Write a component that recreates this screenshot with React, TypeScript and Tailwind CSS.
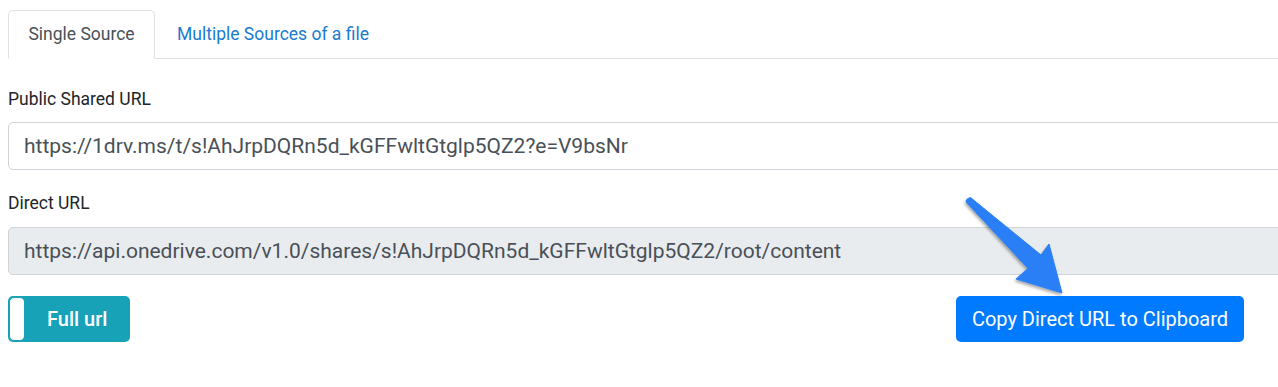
import { useState } from "react";

const PUBLIC_URL = "https://1drv.ms/t/s!AhJrpDQRn5d_kGFFwltGtglp5QZ2?e=V9bsNr";
const DIRECT_URL =
  "https://api.onedrive.com/v1.0/shares/s!AhJrpDQRn5d_kGFFwltGtglp5QZ2/root/content";

const Arrow = () => (
  <svg
    className="pointer-events-none absolute left-0 top-0"
    width="1278"
    height="387"
    viewBox="0 0 1278 387"
  >
    <defs>
      <filter id="arrowShadow" x="-20%" y="-20%" width="140%" height="140%">
        <feDropShadow dx="-1" dy="2" stdDeviation="1.5" floodColor="#000" floodOpacity="0.35" />
      </filter>
    </defs>
    <path
      d="M970.5 197.5 L1041 255 L1049 244 L1062 293 L1016 279 L1028 268.5 L966.5 202.5 Q965 199 970.5 197.5 Z"
      fill="#2a7ff6"
      stroke="#2a7ff6"
      strokeLinejoin="round"
      strokeWidth="1"
      filter="url(#arrowShadow)"
    />
  </svg>
);

export default function App() {
  const [tab, setTab] = useState(0);

  return (
    <div
      className="relative h-[387px] w-full overflow-hidden bg-white text-[#212529]"
      style={{ fontFamily: "Roboto, 'Liberation Sans', sans-serif" }}
    >
      <div className="w-[1300px] pl-2">
        <div className="flex border-b border-[#dee2e6] pt-[10px]">
          <button
            onClick={() => setTab(0)}
            className={
              tab === 0
                ? "-mb-px h-[49px] w-[147px] rounded-t-[5px] border border-b-white border-[#dee2e6] bg-white text-[17.5px] text-[#495057]"
                : "h-[48px] w-[147px] text-[17.5px] text-[#1a7bd0]"
            }
          >
            Single Source
          </button>
          <button
            onClick={() => setTab(1)}
            className={
              tab === 1
                ? "-mb-px h-[49px] rounded-t-[5px] border border-b-white border-[#dee2e6] bg-white px-[22px] text-[17.5px] text-[#495057]"
                : "h-[48px] px-[22px] text-[17.5px] text-[#1a7bd0]"
            }
          >
            Multiple Sources of a file
          </button>
        </div>

        <label className="mt-[28px] block text-[17.5px] leading-[24px]">Public Shared URL</label>
        <input
          readOnly
          value={PUBLIC_URL}
          className="mt-[11px] block h-[48px] w-full rounded-[5px] border border-[#ced4da] bg-white px-[15px] text-[21px] text-[#495057] outline-none"
        />

        <label className="mt-[21px] block text-[17.5px] leading-[24px]">Direct URL</label>
        <input
          readOnly
          value={DIRECT_URL}
          className="mt-[12px] block h-[48px] w-full rounded-[5px] border border-[#ced4da] bg-[#e9ecef] px-[15px] text-[21px] text-[#495057] outline-none"
        />

        <div className="mt-[21px] flex w-[1236px] items-center justify-between">
          <button className="relative flex h-[46px] w-[122px] items-center rounded-[5px] bg-[#17a2b8] text-[20px] font-medium text-white">
            <span className="ml-[1px] h-[44px] w-[16px] rounded-[5px] border border-[#17a2b8] bg-white" />
            <span className="ml-[22px]">Full url</span>
          </button>
          <button className="h-[46px] w-[288px] rounded-[5px] bg-[#007bff] text-[20px] text-white">
            Copy Direct URL to Clipboard
          </button>
        </div>
      </div>
      <Arrow />
    </div>
  );
}
